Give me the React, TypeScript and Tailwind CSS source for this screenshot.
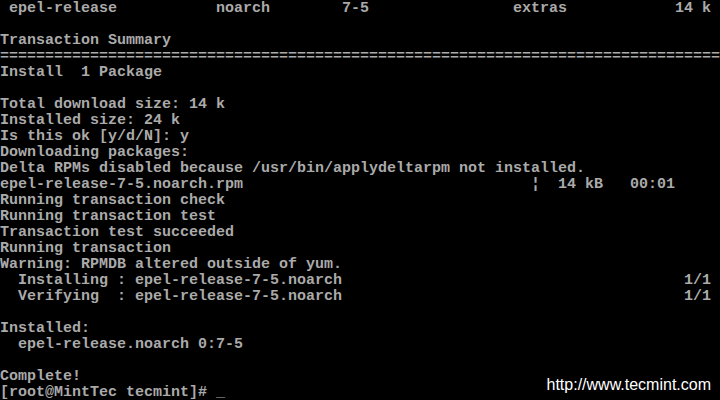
const col = (parts: [number, string][]) => {
  // place each text fragment at a fixed column of the 80-column screen
  let out = "";
  for (const [c, t] of parts) out = out.padEnd(c, " ") + t;
  return out;
};

const lines: string[] = [
  col([[1, "epel-release"], [24, "noarch"], [38, "7-5"], [57, "extras"], [75, "14 k"]]),
  "",
  "Transaction Summary",
  "=".repeat(80),
  "Install  1 Package",
  "",
  "Total download size: 14 k",
  "Installed size: 24 k",
  "Is this ok [y/d/N]: y",
  "Downloading packages:",
  "Delta RPMs disabled because /usr/bin/applydeltarpm not installed.",
  col([[0, "epel-release-7-5.noarch.rpm"], [59, "¦  14 kB"], [70, "00:01"]]),
  "Running transaction check",
  "Running transaction test",
  "Transaction test succeeded",
  "Running transaction",
  "Warning: RPMDB altered outside of yum.",
  col([[0, "  Installing : epel-release-7-5.noarch"], [76, "1/1"]]),
  col([[0, "  Verifying  : epel-release-7-5.noarch"], [76, "1/1"]]),
  "",
  "Installed:",
  "  epel-release.noarch 0:7-5",
  "",
  "Complete!",
  "[root@MintTec tecmint]# _",
];

export default function App() {
  return (
    <div className="relative w-[720px] h-[400px] overflow-hidden bg-black">
      <div className="flex flex-col pt-px font-['Liberation_Mono',monospace] text-[15px] font-bold leading-4 text-[#aaaaaa]">
        {lines.map((l, i) => (
          <div key={i} className="h-4 whitespace-pre">
            {l}
          </div>
        ))}
      </div>

      {/* watermark */}
      <div className="absolute right-[9px] bottom-[3px] font-['Liberation_Sans',Arial,sans-serif] text-[16px] text-white">
        http://www.tecmint.com
      </div>
    </div>
  );
}
